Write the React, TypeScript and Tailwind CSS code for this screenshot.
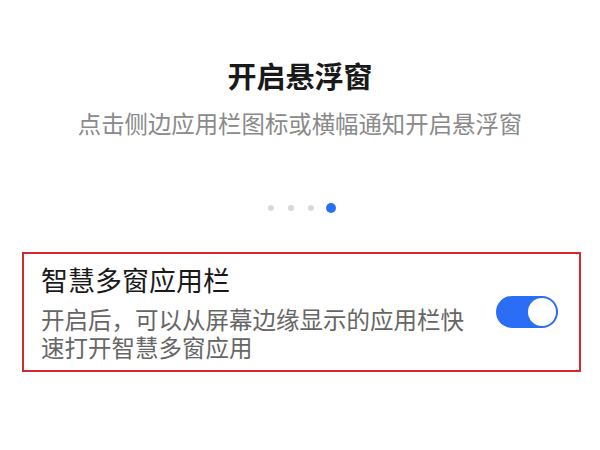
import React from 'react'

const font = { fontFamily: '"Noto Sans CJK SC", "Noto Sans", sans-serif' }

function PageDots({ count, active }: { count: number; active: number }) {
  return (
    <div className="flex h-[10px] items-center justify-center gap-[10px] pl-[1px]">
      {Array.from({ length: count }).map((_, i) =>
        i === active ? (
          <span key={i} className="block h-[10px] w-[10px] rounded-full bg-[#2b6ef5]" />
        ) : (
          <span key={i} className="mx-[2px] block h-[6px] w-[6px] rounded-full bg-[#d9d9d9]" />
        )
      )}
    </div>
  )
}

function Toggle({ on }: { on: boolean }) {
  return (
    <div
      className={`relative h-[32px] w-[62px] shrink-0 rounded-full ${on ? 'bg-[#2b6ef5]' : 'bg-[#d0d0d0]'}`}
    >
      <span
        className={`absolute top-[2px] block h-[28px] w-[28px] rounded-full bg-white ${on ? 'right-[2px]' : 'left-[2px]'}`}
      />
    </div>
  )
}

export default function App() {
  return (
    <div className="h-[450px] w-[600px] overflow-hidden bg-white" style={font}>
      <h1 className="mt-[61px] text-center text-[29px] leading-none font-bold text-[#191919]">
        开启悬浮窗
      </h1>
      <p className="mt-[22px] text-center text-[23.4px] leading-none text-[#8a8a8a]">
        点击侧边应用栏图标或横幅通知开启悬浮窗
      </p>

      <div className="mt-[68px]">
        <PageDots count={4} active={3} />
      </div>

      <div className="ml-[22px] mt-[39px] flex h-[120px] w-[559px] items-center justify-between border-2 border-[#d8262d] pl-[17px] pr-[21px]">
        <div className="flex h-full flex-col pt-[12px]">
          <div className="text-[27px] leading-none text-[#1a1a1a]">智慧多窗应用栏</div>
          <div className="mt-[12px] w-[430px] text-[23.5px] leading-[28px] text-[#666666]">
            开启后，可以从屏幕边缘显示的应用栏快速打开智慧多窗应用
          </div>
        </div>
        <Toggle on />
      </div>
    </div>
  )
}
